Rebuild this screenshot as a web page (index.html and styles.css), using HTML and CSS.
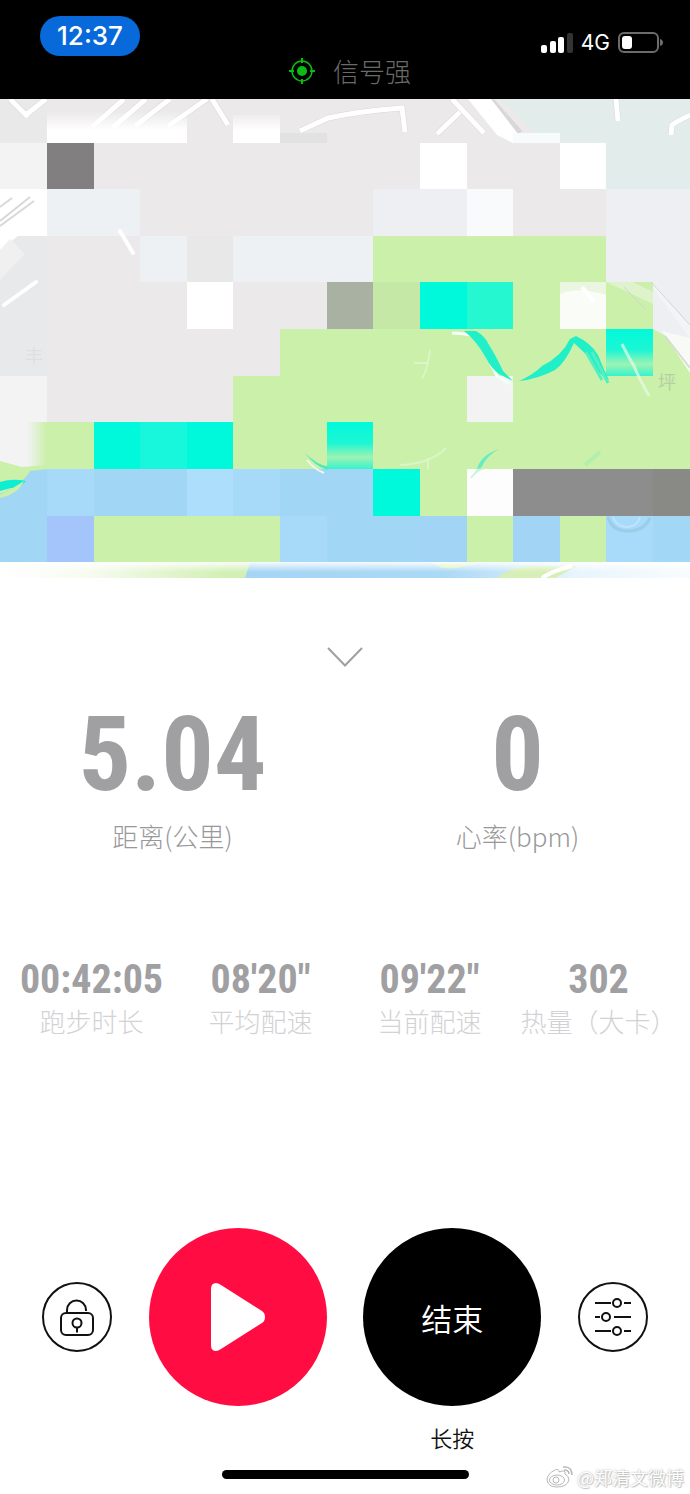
FILE: index.html
```html
<!DOCTYPE html>
<html lang="zh-CN">
	<head>
		<meta charset="UTF-8">
		<meta name="viewport" content="width=device-width, initial-scale=1">
		<title>跑步</title>
		<link rel="stylesheet" href="styles.css">
	</head>
	<body>
		<div id="app">
			<!-- 顶部状态栏 -->
			<header class="top">
				<div class="status">
					<span class="time">12:37</span>
					<div class="net">
						<svg class="bars" width="32" height="20" viewBox="0 0 32 20">
							<g fill="#fff">
								<rect x="0" y="12" width="6" height="8" rx="2"/>
								<rect x="9" y="8" width="6" height="12" rx="2"/>
								<rect x="17" y="4" width="6" height="16" rx="2"/>
							</g>
							<rect x="26" y="0" width="6" height="20" rx="2" fill="#333"/>
						</svg>
						<span class="net_type">4G</span>
						<svg width="46" height="22" viewBox="0 0 46 22">
							<rect x="1" y="1" width="39" height="19" rx="5" fill="none" stroke="#6c6c6c" stroke-width="2"/>
							<rect x="4" y="4" width="10" height="13" rx="3" fill="#fff"/>
							<path d="M42 7q3 1 3 3.500t-3 3.500z" fill="#6c6c6c"/>
						</svg>
					</div>
				</div>
				<div class="signal">
					<svg width="26" height="26" viewBox="0 0 26 26">
						<circle cx="13" cy="13" r="10" fill="none" stroke="#0dbb12" stroke-width="1.500"/>
						<circle cx="13" cy="13" r="5" fill="#0dbb12"/>
						<path d="M13 0v5M13 21v5M0 13h5M21 13h5" stroke="#0dbb12" stroke-width="2"/>
					</svg>
					<span>信号强</span>
				</div>
			</header>

			<!-- 地图 -->
			<svg class="map" viewBox="0 0 690 479">
				<defs>
					<linearGradient id="fade" x1="0" y1="0" x2="0" y2="1">
						<stop offset="0" stop-color="#fff" stop-opacity="0"/>
						<stop offset="0.600" stop-color="#fff"/>
					</linearGradient>
					<linearGradient id="teal" x1="0" y1="0" x2="0" y2="1">
						<stop offset="0" stop-color="#00f9db"/>
						<stop offset="0.450" stop-color="#1df6d4"/>
						<stop offset="0.750" stop-color="#9df3b4"/>
						<stop offset="1" stop-color="#35f4ce"/>
					</linearGradient>
					<linearGradient id="edge" x1="0" y1="0" x2="1" y2="0">
						<stop offset="0" stop-color="#caf0aa" stop-opacity="0"/>
						<stop offset="0.300" stop-color="#caf0aa"/>
					</linearGradient>
					<linearGradient id="strip" x1="0" y1="0" x2="1" y2="0">
						<stop offset="0" stop-color="#fff"/>
						<stop offset="0.350" stop-color="#f7fbf0"/>
						<stop offset="0.900" stop-color="#d2f0b5"/>
					</linearGradient>
					<linearGradient id="strip_r" x1="0" y1="0" x2="1" y2="0">
						<stop offset="0" stop-color="#a5d5f5"/>
						<stop offset="0.450" stop-color="#abd9f6"/>
						<stop offset="0.750" stop-color="#e8f5fd"/>
						<stop offset="1" stop-color="#f8fcff"/>
					</linearGradient>
					<linearGradient id="haze" x1="0" y1="0" x2="0" y2="1">
						<stop offset="0" stop-color="#fff" stop-opacity="0.900"/>
						<stop offset="1" stop-color="#fff" stop-opacity="0"/>
					</linearGradient>
				</defs>
				<rect width="690" height="479" fill="#ebe9ea"/>
				<path d="M0 0h47v44H0z" fill="#e9e9e9"/>
				<path d="M501 0h189v90h-84V44h-60z" fill="#e2ecea"/>
				<path d="M0 137h47v140H0z" fill="#e8e9ea"/>

				<!-- 道路 -->
				<g fill="none" stroke="#d9d8d9" stroke-width="6">
					<path d="M10 0l18 18M46 0L27 15M124 0L92 28M146 0L112 29M170 0L135 27M207 0L168 27M212 0L228 26"/>
					<path d="M452 0l32 34M490 0l30 34M300 32l28-13Q360 12 402 9l3 24M460 13l-23 22M616 0l2 22M690 16q-14 7-18 10l-1 10"/>
				</g>
				<g fill="none" stroke="#fff" stroke-width="5">
					<path d="M10 0l18 18M46 0L27 15M124 0L92 28M146 0L112 29M170 0L135 27M207 0L168 27M212 0L228 26"/>
					<path d="M452 0l32 34M300 32l28-13Q360 12 402 9l3 24M460 13l-23 22M616 0l2 22M690 16q-14 7-18 10l-1 10"/>
				</g>
				<path d="M468 0h23l34 44h-12L497 36z" fill="#fff"/>
				<path d="M47 12h140v32H47zM233 16h47v28h-47z" fill="url(#fade)"/>
				<path d="M513 34h47v10h-47z" fill="#f8fbfb"/>
				<path d="M280 34h47v10h-47z" fill="#e2e2e3"/>

				<!-- 浅色方块 -->
				<path d="M0 44h47v46H0zM0 277h47v93H0z" fill="#f3f3f4"/>
				<path d="M47 44h47v46H47z" fill="#827f80"/>
				<path d="M420 44h47v46h-47zM560 44h46v46h-46zM0 90h47v47H0zM187 183h46v47h-46z" fill="#fff"/>
				<path d="M47 90h93v47H47zM140 137h47v46h-47zM233 137h140v46H233z" fill="#eef1f3"/>
				<path d="M187 137h46v46h-46z" fill="#e8e8e9"/>
				<path d="M373 90h94v47h-94zM606 90h84v140h-84z" fill="#eeeff2"/>
				<path d="M467 90h46v47h-46z" fill="#f9fafb"/>
				<path d="M0 108l12-9M0 122l30-24M0 127l34-25" stroke="#d8d8d8" stroke-width="2"/>
				<path d="M0 137h18L0 151z" fill="#fff"/>
				<path d="M0 151l10-11 15 15-25 26z" fill="#f0f0f0"/>
				<path d="M4 206l32-23M120 132l13 22" stroke="#fff" stroke-width="4" stroke-linecap="round"/>

				<!-- 绿地 -->
				<path d="M373 137h233v46h47v47h37v140h-37v47H420v-47h-47v47H94v-47h139v-93h47v-47h93z" fill="#caf0aa"/>
				<path d="M373 183h47v47h-47z" fill="#c5e8a6"/>
				<path d="M327 183h46v47h-46z" fill="#a8b1a2"/>
				<path d="M653 183h37v67l-37-20z" fill="#eeeff2"/>
				<path d="M560 183h46v47h-46z" fill="#fafcf8"/>
				<path d="M560 195q18-8 46 1v-13h-46z" fill="#eaf6df"/>
				<path d="M582 188l12 15" stroke="#fff" stroke-width="4"/>
				<path d="M606 183l47 22v-12l-20-10z" fill="#def3cc"/>
				<path d="M653 184l37 42v13l-37-50z" fill="#f3f4f5"/>
				<path d="M651 183l39 43M624 188l22 23" stroke="#d4d4d4" stroke-width="1"/>
				<path d="M662 232l28 7v35z" fill="#f7faf5"/>
				<path d="M665 237l25 32" stroke="#d7dbd4" stroke-width="2"/>
				<path d="M420 183h47v47h-47z" fill="#00f9db"/>
				<path d="M467 183h46v47h-46z" fill="#25f7d1"/>
				<path d="M606 230h47v47h-47z" fill="url(#teal)"/>
				<path d="M467 277h46v46h-46z" fill="#f3f3f3"/>

				<!-- 路线 -->
				<path d="M452 234q20 1 23 4 7 7 11 17l11 22 13 8" fill="none" stroke="#f5fff9" stroke-width="3"/>
				<path d="M464 232l12 0q9 5 13 14 7 11 14 26l10 10-14-7q-8-6-13-16-10-18-22-27z" fill="#20efc8"/>
				<path d="M519 282q14-6 23-15 20-10 28-27l6-3q15 7 22 19 6 15 11 25-11-5-20-23l-15-14q-9 20-19 27-17 9-36 11z" fill="#20efc8"/>
				<path d="M586 253l16 28M592 253l16 31" fill="none" stroke="#54efc0" stroke-width="3"/>
				<path d="M622 245q7 14 12 22 4 10 15 30" fill="none" stroke="#eaf9e5" stroke-width="3" opacity="0.700"/>
				<path d="M430 251q-2 18-8 29M414 264h15M400 366q30-1 46-17M428 359v16" fill="none" stroke="#dbf5c6" stroke-width="2"/>
				<path d="M477 370q4-14 22-20-12 6-18 19z" fill="#64edc0"/>
				<path d="M585 366l15-13" stroke="#b2efaf" stroke-width="4"/>
				<text class="place" x="658" y="290">坪</text>
				<text class="place faint" x="25" y="264">丰</text>

				<!-- 水域 -->
				<path d="M27 323h67v47H27z" fill="url(#edge)"/>
				<path d="M94 323h46v47H94zM187 323h46v47h-46z" fill="#00f9db"/>
				<path d="M140 323h47v47h-47z" fill="#18f7db"/>
				<path d="M327 323h46v47h-46z" fill="url(#teal)"/>
				<path d="M0 362l22 6 25-2-8 18-39 16z" fill="#caf0aa"/>
				<path d="M47 370h326v47h47v46H0v-68q22-9 30-23z" fill="#a2d6f5"/>
				<path d="M0 383q12-4 26-1-7 8-15 7l-11 3z" fill="#10eed2"/>
				<path d="M0 396q15-8 24-14-6 13-24 17z" fill="#caf0aa"/>
				<path d="M47 370h47v47H47zM233 370h47v47h-47zM280 417h47v46h-47z" fill="#a6daf8"/>
				<path d="M187 370h46v47h-46z" fill="#addefc"/>
				<path d="M47 417h47v46H47z" fill="#a4c5fb"/>
				<path d="M94 417h186v46H94z" fill="#caf0aa"/>
				<path d="M305 354q12 12 24 14l-2 3q-12-4-22-17z" fill="#4ee9bf"/>
				<path d="M307 361q7 9 17 13" fill="none" stroke="#edf8eb" stroke-width="2"/>
				<path d="M373 370h47v47h-47z" fill="#00f9db"/>
				<path d="M420 370h47v47h-47z" fill="#caf0aa"/>
				<path d="M420 417h47v46h-47zM513 417h47v46h-47z" fill="#a2d5f5"/>
				<path d="M467 417h46v46h-46zM560 417h46v46h-46z" fill="#caf0aa"/>
				<path d="M606 417h84v46h-84z" fill="#a8daf9"/>
				<path d="M653 417h37v46h-37z" fill="#a3d7f6"/>
				<path d="M467 370h46v47h-46z" fill="#fcfdfc"/>
				<path d="M470 379l7-9h8q-8 2-13 9z" fill="#c9f4e2"/>
				<path d="M513 370h140v47H513z" fill="#8d8d8d"/>
				<path d="M653 370h37v47h-37z" fill="#898a86"/>
				<path d="M608 418q4 14 20 14t22-13" fill="none" stroke="#9bcce8" stroke-width="3"/>
				<path d="M613 418q4 10 14 10t13-10" fill="none" stroke="#c0e4fa" stroke-width="2"/>

				<!-- 底部过渡 -->
				<path d="M0 463h250v16H0z" fill="url(#strip)"/>
				<path d="M250 463h440v16H245z" fill="url(#strip_r)"/>
				<path d="M430 463h50q-20 8-38 6zM497 479q12-10 30-12h50l-22 12z" fill="#d5efb6"/>
				<path d="M542 479q10-7 30-12" fill="none" stroke="#fff" stroke-width="4"/>
				<path d="M0 463h690v10H0z" fill="url(#haze)"/>
			</svg>

			<button class="fold" aria-label="收起">
				<svg width="36" height="20" viewBox="0 0 36 20">
					<path d="M1 1l17 17.500L35 1" fill="none" stroke="#a0a0a0" stroke-width="2"/>
				</svg>
			</button>

			<!-- 运动数据 -->
			<div class="main_data">
				<div class="item">
					<strong>5.04</strong>
					<span>距离(公里)</span>
				</div>
				<div class="item">
					<strong>0</strong>
					<span>心率(bpm)</span>
				</div>
			</div>
			<div class="sub_data">
				<div class="item">
					<strong>00:42:05</strong>
					<span>跑步时长</span>
				</div>
				<div class="item">
					<strong>08'20"</strong>
					<span>平均配速</span>
				</div>
				<div class="item">
					<strong>09'22"</strong>
					<span>当前配速</span>
				</div>
				<div class="item">
					<strong>302</strong>
					<span>热量（大卡）</span>
				</div>
			</div>

			<!-- 操作按钮 -->
			<div class="control">
				<button class="btn small" aria-label="锁定">
					<svg width="36" height="38" viewBox="0 0 36 38" fill="none" stroke="#111" stroke-width="2">
						<rect x="2" y="15" width="32" height="22" rx="5"/>
						<path d="M8 15v-3a9.500 9.500 0 0 1 19 0v1"/>
						<circle cx="18" cy="25" r="4.500"/>
						<path d="M18 29.500v5"/>
					</svg>
				</button>
				<button class="btn play" aria-label="继续">
					<svg width="56" height="68" viewBox="0 0 56 68">
						<path d="M1 6Q1 0 6 0q2 0 5 2l41 26q3 2 3 6t-3 6L11 66q-3 2-5 2-5 0-5-6z" fill="#fff"/>
					</svg>
				</button>
				<button class="btn end">结束</button>
				<button class="btn small" aria-label="设置">
					<svg width="38" height="38" viewBox="0 0 38 38" fill="none" stroke="#111" stroke-width="2">
						<path d="M1 5h16M30 5h7M1 19h5M20 19h17M1 33h16M30 33h7"/>
						<circle cx="23" cy="5" r="4"/>
						<circle cx="12" cy="19" r="4"/>
						<circle cx="23" cy="33" r="4"/>
					</svg>
				</button>
				<span class="tip">长按</span>
			</div>
			<div class="home"></div>

			<!-- 水印 -->
			<div class="mark">
				<svg width="28" height="24" viewBox="0 0 28 24" fill="none" stroke="#b9b9b9">
					<path d="M19 9q1-5-6-2 0-4-4-2Q1 9 1 15q1 7 10 7 10 0 12-7 0-4-4-6z"/>
					<ellipse cx="11" cy="15" rx="7.500" ry="5"/>
					<circle cx="10" cy="15" r="3"/>
					<path d="M17 2q9-1 9 8M18 5q5 0 5 4" stroke-width="1.500"/>
				</svg>
				<span>@郑清文微博</span>
			</div>
		</div>
	</body>
</html>
```
FILE: styles.css
```css
*{
	padding: 0;
	margin: 0;
	box-sizing: border-box;
}
body{
	background: #fff;
	font-family: "Noto Sans CJK SC", sans-serif;
}
button{
	border: none;
	background: none;
	font-family: inherit;
	cursor: pointer;
}
svg{
	display: block;
}
#app{
	position: relative;
	overflow: hidden;
}
/*状态栏*/
.top{
	background: #000;
	height: 99px;
	padding: 16px 26px 0 40px;
}
.status{
	display: flex;
	justify-content: space-between;
	height: 40px;
}
.time{
	width: 100px;
	height: 40px;
	border-radius: 20px;
	background: #0869da;
	color: #fff;
	font: 500 26px/40px Inter, sans-serif;
	text-align: center;
}
.net{
	display: flex;
	align-items: center;
	padding-top: 14px;
}
.net_type{
	color: #fff;
	font: 21px/24px Inter, sans-serif;
	margin: 0 8px;
}
.signal{
	display: flex;
	justify-content: center;
	align-items: center;
	gap: 18px;
	height: 30px;
	padding-right: 4px;
	color: #6a6a6a;
	font-size: 26px;
	font-weight: 300;
	line-height: 30px;
}
/*地图*/
.map{
	width: 100%;
	height: auto;
}
.place{
	font-size: 18px;
	fill: #b7cfa6;
}
.faint{
	fill: #dfdfe0;
}
.fold{
	display: block;
	margin: 61px auto 0;
	padding: 8px;
}
/*数据*/
.item{
	display: flex;
	flex-direction: column;
	align-items: center;
	white-space: nowrap;
}
.item strong{
	color: #a0a0a3;
	font-family: "Roboto Condensed", "Liberation Sans Narrow", Roboto, sans-serif;
}
.main_data{
	display: grid;
	grid-template-columns: 1fr 1fr;
	margin-top: 25px;
}
.main_data strong{
	font-size: 104px;
	line-height: 110px;
}
.main_data span{
	margin-top: 8px;
	color: #98989a;
	font-size: 26px;
	font-weight: 300;
	line-height: 36px;
}
.sub_data{
	display: grid;
	grid-template-columns: repeat(4, 1fr);
	margin-top: 103px;
	padding: 0 7px;
}
.sub_data strong{
	font-size: 40px;
	line-height: 46px;
}
.sub_data span{
	color: #d2d2d4;
	font-size: 26px;
	font-weight: 300;
	line-height: 36px;
}
/*按钮*/
.control{
	display: grid;
	grid-template-columns: repeat(4, auto);
	justify-content: space-between;
	align-items: center;
	margin-top: 189px;
	padding: 0 42px;
}
.btn{
	display: flex;
	justify-content: center;
	align-items: center;
	width: 178px;
	height: 178px;
	border-radius: 50%;
}
.small{
	width: 70px;
	height: 70px;
	border: 2px solid #111;
}
.play{
	background: #ff0c42;
}
.end{
	background: #000;
	color: #fff;
	font-size: 31px;
	font-weight: 350;
}
.tip{
	grid-column: 3;
	margin-top: 14px;
	color: #111;
	font-size: 22px;
	font-weight: 350;
	line-height: 34px;
	text-align: center;
}
.home{
	width: 247px;
	height: 9px;
	margin: 16px auto 14px;
	border-radius: 5px;
	background: #000;
}
.mark{
	position: absolute;
	right: 6px;
	bottom: 4px;
	display: flex;
	align-items: center;
	gap: 3px;
	color: #fff;
	font-size: 18px;
	line-height: 24px;
	text-shadow: 0 0 2px #aaa, 1px 1px 1px #ccc;
}
```
